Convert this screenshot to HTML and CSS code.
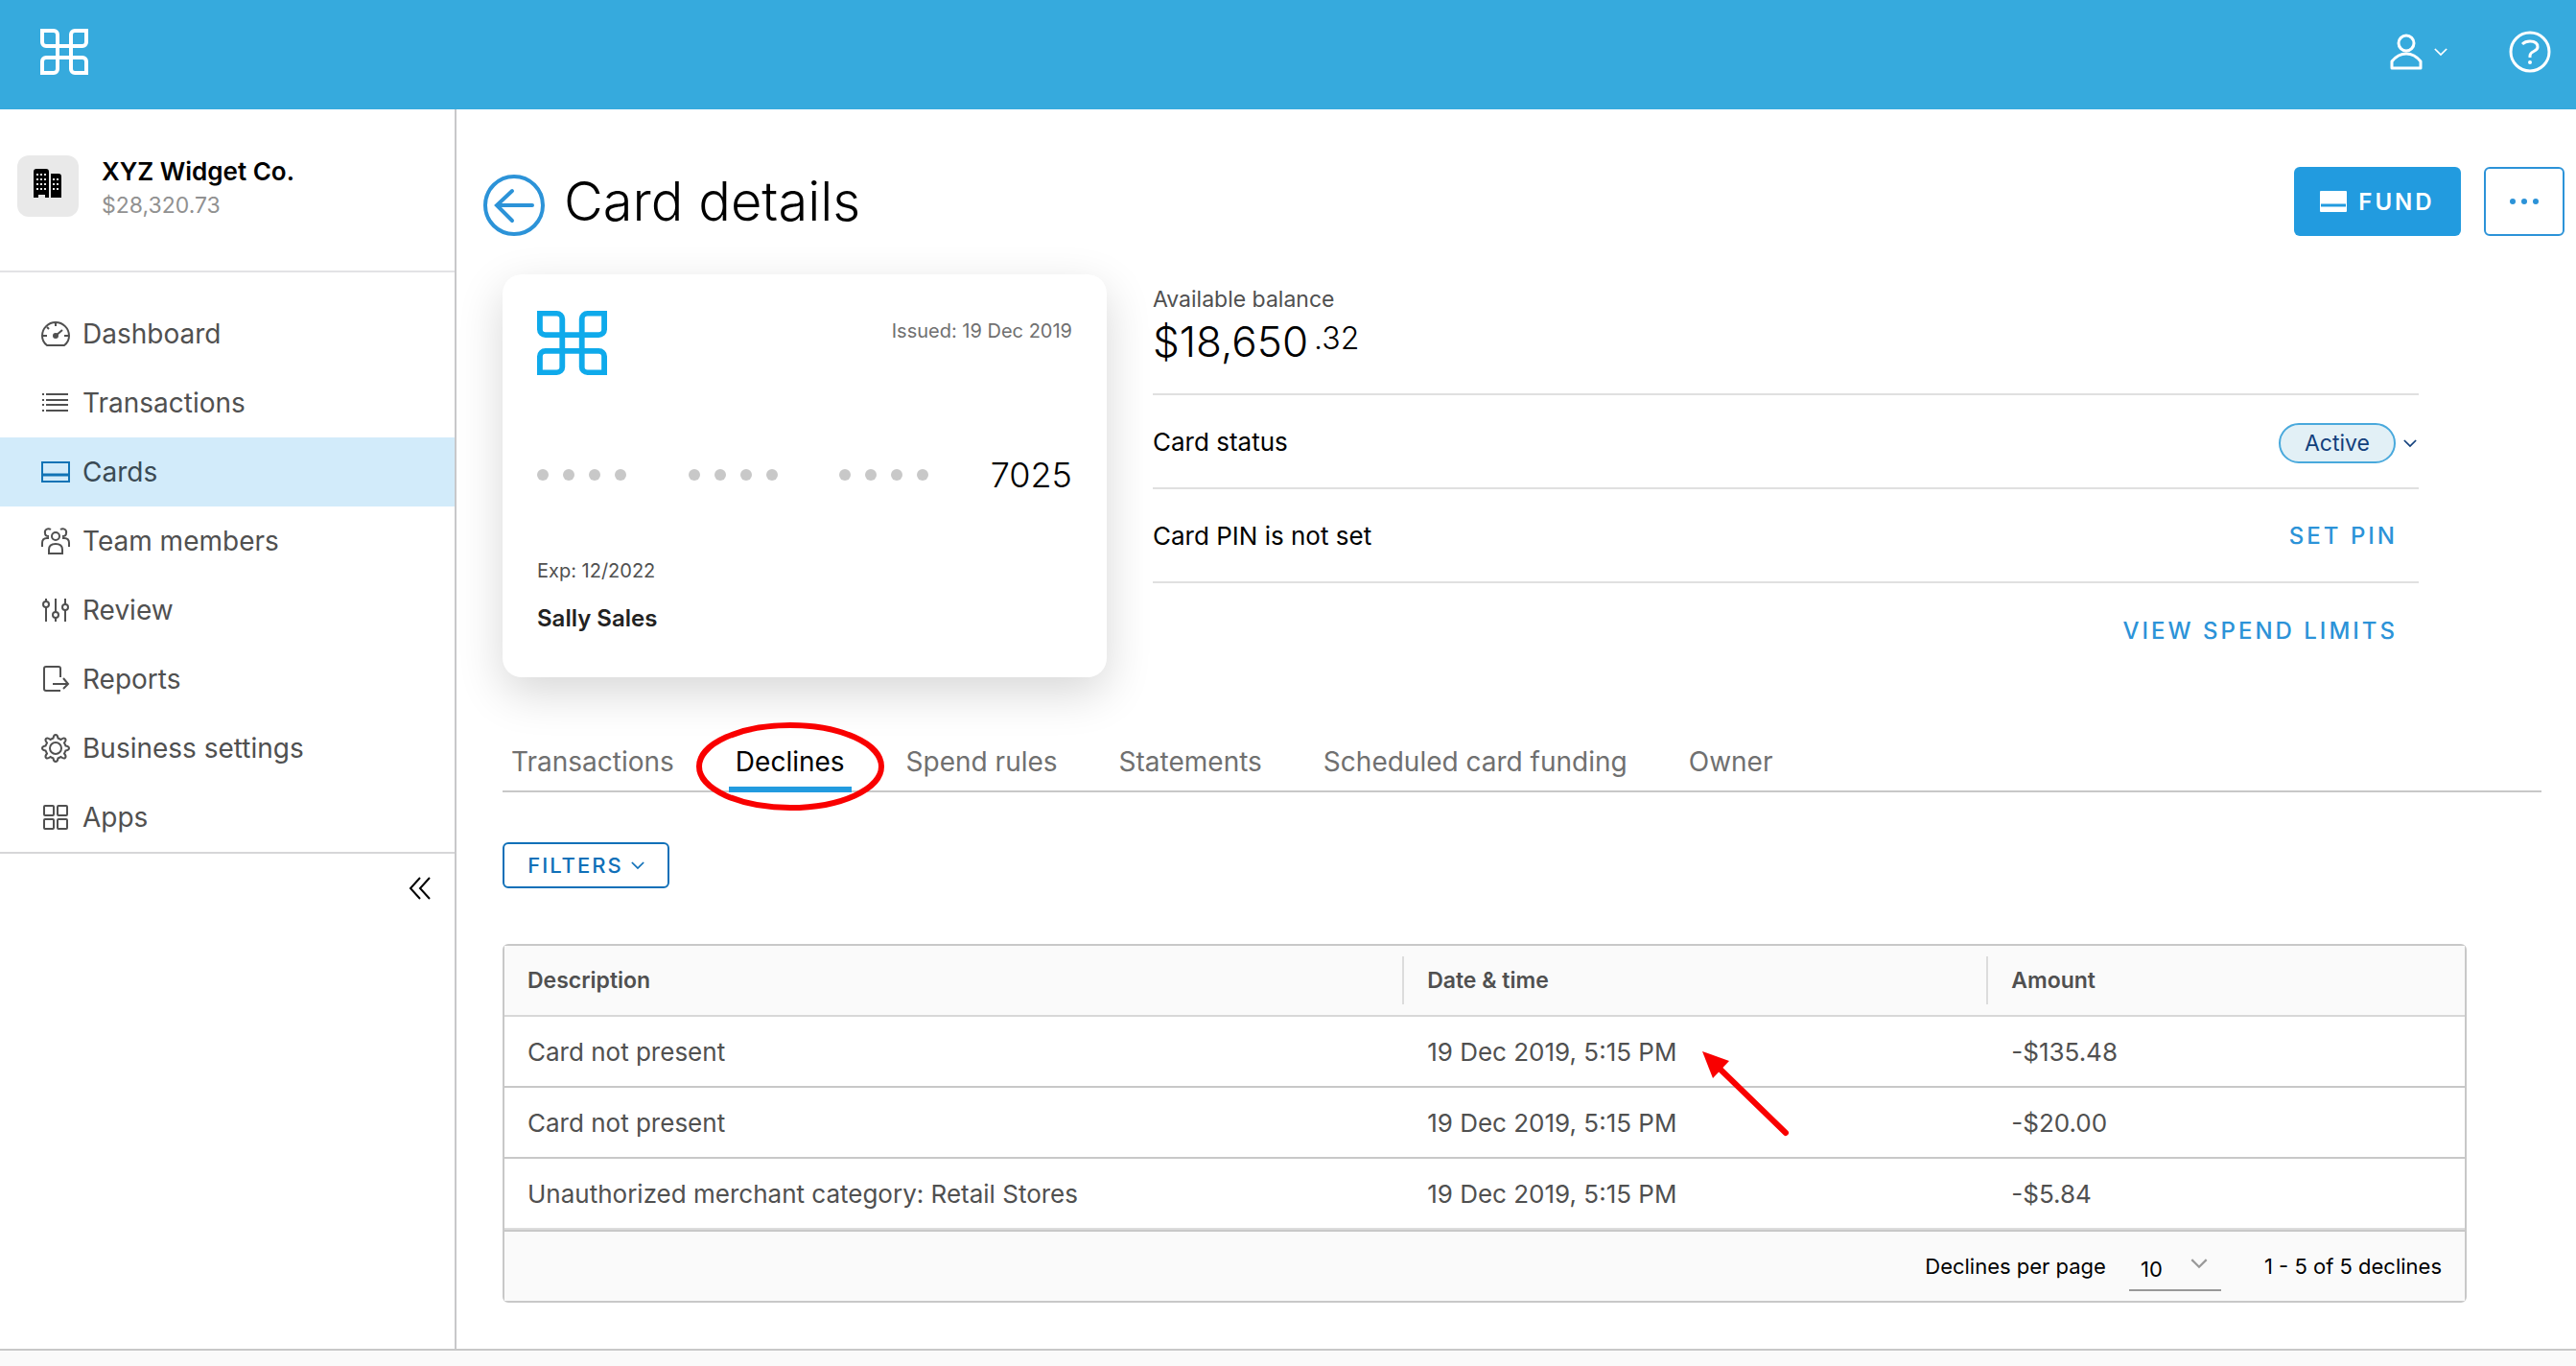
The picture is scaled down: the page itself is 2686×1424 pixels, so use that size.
FILE: index.html
```html
<!DOCTYPE html>
<html lang="en">
<head>
    <meta charset="UTF-8">
    <meta name="viewport" content="width=device-width, initial-scale=1.0">
    <title>Card details</title>
    <link rel="stylesheet" href="styles.css">
</head>
<body>
    <!-- shared logo -->
    <svg class="defs" width="0" height="0" aria-hidden="true">
        <symbol id="logo" viewBox="0 0 50 48" preserveAspectRatio="none">
            <path d="M2 2h12a4 4 0 0 1 4 4v36a4 4 0 0 1-4 4H2V34a4 4 0 0 1 4-4h38a4 4 0 0 1 4 4v12H36a4 4 0 0 1-4-4V6a4 4 0 0 1 4-4h12v12a4 4 0 0 1-4 4H6a4 4 0 0 1-4-4z" fill="none" stroke="currentColor" stroke-width="4"/>
        </symbol>
        <symbol id="chevron" viewBox="0 0 16 10">
            <path d="M1 1l7 7 7-7" fill="none" stroke="currentColor" stroke-width="2"/>
        </symbol>
    </svg>

    <header class="topbar">
        <a href="#" class="topbar-logo" aria-label="Home"><svg width="50" height="48"><use href="#logo"/></svg></a>
        <div class="topbar-actions">
            <button type="button" class="icon-button user-button" aria-label="Account">
                <svg width="34" height="38" viewBox="0 0 34 38" fill="none" stroke="currentColor" stroke-width="3">
                    <circle cx="17" cy="10" r="8"/>
                    <path d="M2 36V29C6 24 11 21 17 21s11 3 15 8v7z" stroke-linejoin="round"/>
                </svg>
                <svg width="14" height="9"><use href="#chevron"/></svg>
            </button>
            <button type="button" class="icon-button" aria-label="Help">
                <svg width="44" height="44" viewBox="0 0 44 44" fill="none" stroke="currentColor" stroke-width="3">
                    <circle cx="22" cy="22" r="20"/>
                    <path d="M14 14c2-2 5-3 8-3 5 0 8 2 8 6 0 5-8 4-8 9v2"/>
                    <circle cx="22" cy="33" r="2" fill="currentColor" stroke="none"/>
                </svg>
            </button>
        </div>
    </header>

    <div class="layout">
        <aside class="sidebar">
            <div class="company">
                <span class="company-icon">
                    <svg width="30" height="30" viewBox="0 0 30 30">
                        <path d="M0 30V3q0-3 3-3h10q3 0 3 3v27h-4v-3H5v3zM18 30V5h8q3 0 3 3v22z"/>
                        <path d="M3 6h11M3 11h11M3 16h11M3 21h11M20 11h8M20 16h8M20 21h8" stroke="#e9e9e9" stroke-width="2" stroke-dasharray="2 2"/>
                    </svg>
                </span>
                <div>
                    <div class="company-name">XYZ Widget Co.</div>
                    <div class="company-balance">$28,320.73</div>
                </div>
            </div>
            <nav class="menu">
                <a href="#">
                    <svg viewBox="0 0 30 30"><path d="M6 27C2 24 1 20 1 17a14 14 0 0 1 28 0c0 3-1 7-5 10zM15 3v4M6 8l2 2M2 17h4M24 17h4M15 17l7-6"/><circle cx="15" cy="17" r="2" fill="currentColor"/></svg>
                    Dashboard
                </a>
                <a href="#">
                    <svg viewBox="0 0 30 30"><path d="M5 6h23M5 12h23M5 17h23M5 23h23M1 6h2M1 12h2M1 17h2M1 23h2"/></svg>
                    Transactions
                </a>
                <a href="#" class="current">
                    <svg viewBox="0 0 30 30"><path d="M1 5h28v20H1z"/><path d="M1 18h28" stroke-width="3"/></svg>
                    Cards
                </a>
                <a href="#">
                    <svg viewBox="0 0 30 30"><circle cx="15" cy="10" r="4"/><path d="M8 28v-4c0-4 3-6 7-6s7 2 7 6v4zM10 3C7 1 3 3 4 7c0 2 2 3 4 3M20 3c3-2 7 0 6 4 0 2-2 3-4 3M1 21v-4c0-3 2-5 5-5h2M29 21v-4c0-3-2-5-5-5h-2"/></svg>
                    Team members
                </a>
                <a href="#">
                    <svg viewBox="0 0 30 30"><path d="M5 3v3M5 12v15M15 3v14M15 23v4M25 3v6M25 15v12"/><circle cx="5" cy="9" r="3"/><circle cx="15" cy="20" r="3"/><circle cx="25" cy="12" r="3"/></svg>
                    Review
                </a>
                <a href="#">
                    <svg viewBox="0 0 30 30"><path d="M20 13V4q0-2-2-2H5Q3 2 3 4v21q0 2 2 2h15M12 20h16M23 14l5 6-5 5"/></svg>
                    Reports
                </a>
                <a href="#">
                    <svg viewBox="0 0 30 30"><circle cx="15" cy="15" r="6"/><path d="M12.500 4.500Q13 1 15 1t2.500 3.500l3 1.500q3-2.500 4.500-1t-1 4.500l1.500 3Q29 13 29 15t-3.500 2.500l-1.500 3q2.500 3 1 4.500t-4.500-1l-3 1.500Q17 29 15 29t-2.500-3.500l-3-1.500q-3 2.500-4.500 1t1-4.500l-1.500-3Q1 17 1 15t3.500-2.500l1.500-3Q3.500 6.500 5 5t4.500 1z"/></svg>
                    Business settings
                </a>
                <a href="#">
                    <svg viewBox="0 0 30 30"><rect x="3" y="3" width="10" height="10" rx="1"/><rect x="17" y="3" width="10" height="10" rx="1"/><rect x="3" y="17" width="10" height="10" rx="1"/><rect x="17" y="17" width="10" height="10" rx="1"/></svg>
                    Apps
                </a>
            </nav>
            <button type="button" class="icon-button collapse" aria-label="Collapse menu">
                <svg width="24" height="24" viewBox="0 0 24 24" fill="none" stroke="currentColor" stroke-width="2"><path d="M12 1L2 12l10 11M22 1L12 12l10 11"/></svg>
            </button>
        </aside>

        <main class="main">
            <div class="page-head">
                <button type="button" class="icon-button back" aria-label="Back">
                    <svg width="64" height="64" viewBox="0 0 64 64" fill="none" stroke="currentColor" stroke-width="4">
                        <circle cx="32" cy="32" r="30"/>
                        <path d="M51 32H15M30 17L14 32l16 16" stroke-linecap="round"/>
                    </svg>
                </button>
                <h1>Card details</h1>
                <button type="button" class="fund">
                    <svg width="28" height="22" viewBox="0 0 28 22"><rect width="28" height="22" rx="1" fill="#fff"/><path d="M1 15h26" stroke="#229bdf" stroke-width="3"/></svg>
                    FUND
                </button>
                <button type="button" class="more" aria-label="More actions">
                    <svg width="30" height="6" viewBox="0 0 30 6" fill="currentColor"><circle cx="3" cy="3" r="3"/><circle cx="15" cy="3" r="3"/><circle cx="27" cy="3" r="3"/></svg>
                </button>
            </div>

            <div class="overview">
                <section class="bank-card">
                    <div class="bank-card-top">
                        <svg width="73" height="67"><use href="#logo"/></svg>
                        <span class="issued">Issued: 19 Dec 2019</span>
                    </div>
                    <div class="bank-card-number">
                        <span class="dots"><i></i><i></i><i></i><i></i></span>
                        <span class="dots"><i></i><i></i><i></i><i></i></span>
                        <span class="dots"><i></i><i></i><i></i><i></i></span>
                        <span class="last-four">7025</span>
                    </div>
                    <div class="expiry">Exp: 12/2022</div>
                    <div class="holder">Sally Sales</div>
                </section>

                <section class="details">
                    <div class="balance">
                        <div class="balance-label">Available balance</div>
                        <div class="balance-value">$18,650<span>.32</span></div>
                    </div>
                    <div class="detail-row">
                        <span>Card status</span>
                        <button type="button" class="icon-button status">
                            <span class="pill">Active</span>
                            <svg width="14" height="9"><use href="#chevron"/></svg>
                        </button>
                    </div>
                    <div class="detail-row">
                        <span>Card PIN is not set</span>
                        <a href="#" class="action">SET PIN</a>
                    </div>
                    <div class="detail-row">
                        <a href="#" class="action">VIEW SPEND LIMITS</a>
                    </div>
                </section>
            </div>

            <nav class="tabs">
                <a href="#">Transactions</a>
                <a href="#" class="active">Declines
                    <svg class="circle-mark" width="198" height="94" viewBox="0 0 198 94"><ellipse cx="99" cy="47" rx="95" ry="43" fill="none" stroke="#f90000" stroke-width="6"/></svg>
                </a>
                <a href="#">Spend rules</a>
                <a href="#">Statements</a>
                <a href="#">Scheduled card funding</a>
                <a href="#">Owner</a>
            </nav>

            <button type="button" class="filters">FILTERS <svg width="14" height="9"><use href="#chevron"/></svg></button>

            <div class="declines">
                <table>
                    <thead>
                        <tr>
                            <th class="col-description"><span>Description</span></th>
                            <th class="col-date"><span>Date &amp; time</span></th>
                            <th><span>Amount</span></th>
                        </tr>
                    </thead>
                    <tbody>
                        <tr>
                            <td>Card not present</td>
                            <td>
                                <span class="date">19 Dec 2019, 5:15 PM
                                    <svg class="arrow-mark" width="94" height="92" viewBox="0 0 94 92"><path d="M18 18l70 68" stroke="#f90000" stroke-width="6" stroke-linecap="round"/><path d="M1 1l28 10L12 29z" fill="#f90000"/></svg>
                                </span>
                            </td>
                            <td>-$135.48</td>
                        </tr>
                        <tr>
                            <td>Card not present</td>
                            <td>19 Dec 2019, 5:15 PM</td>
                            <td>-$20.00</td>
                        </tr>
                        <tr>
                            <td>Unauthorized merchant category: Retail Stores</td>
                            <td>19 Dec 2019, 5:15 PM</td>
                            <td>-$5.84</td>
                        </tr>
                    </tbody>
                </table>
                <div class="pager">
                    <label for="page-size">Declines per page</label>
                    <div class="select">
                        <select id="page-size">
                            <option>10</option>
                            <option>20</option>
                            <option>50</option>
                        </select>
                        <svg width="18" height="11"><use href="#chevron"/></svg>
                    </div>
                    <span>1 - 5 of 5 declines</span>
                </div>
            </div>
        </main>
    </div>

    <footer class="footer"></footer>
</body>
</html>
```

FILE: styles.css
```css
* {
    box-sizing: border-box;
}

body {
    margin: 0;
    min-height: 100vh;
    display: flex;
    flex-direction: column;
    font-family: Inter, "Open Sans", sans-serif;
    font-size: 26px;
    color: #000;
    background-color: #fff;
}

a {
    color: inherit;
    text-decoration: none;
}

button,
select {
    font-family: inherit;
    color: inherit;
    cursor: pointer;
}

svg {
    flex-shrink: 0;
}

.defs {
    position: absolute;
}

.icon-button {
    display: flex;
    align-items: center;
    padding: 0;
    border: none;
    background: none;
}

/* top bar */
.topbar {
    display: flex;
    align-items: center;
    justify-content: space-between;
    height: 114px;
    padding: 0 26px 6px 42px;
    background-color: #36aadd;
    color: #fff;
}

.topbar svg {
    display: block;
}

.topbar-actions {
    display: flex;
    gap: 64px;
}

.user-button {
    gap: 12px;
}

.layout {
    flex: 1;
    display: flex;
}

/* sidebar */
.sidebar {
    width: 476px;
    flex-shrink: 0;
    border-right: 2px solid #c8c8ca;
}

.company {
    display: flex;
    gap: 24px;
    height: 170px;
    padding: 48px 18px 0;
    border-bottom: 2px solid #e3e3e5;
}

.company-icon {
    display: flex;
    width: 64px;
    height: 64px;
    padding: 14px 17px;
    border-radius: 12px;
    background-color: #e9e9e9;
}

.company-name {
    font-size: 26px;
    line-height: 34px;
    font-weight: 600;
}

.company-balance {
    font-size: 23px;
    line-height: 36px;
    color: #919191;
}

.menu {
    padding-top: 28px;
    border-bottom: 2px solid #d6d6d8;
}

.menu a {
    display: flex;
    align-items: center;
    gap: 13px;
    height: 72px;
    padding-left: 43px;
    font-size: 28px;
    color: #505050;
}

.menu svg {
    width: 30px;
    height: 30px;
    fill: none;
    stroke: currentColor;
    stroke-width: 2;
}

.menu .current {
    background-color: #d2ebfa;
    color: #3a4a54;
}

.menu .current svg {
    color: #1173b5;
}

.collapse {
    margin: 24px 24px 0 auto;
}

/* page heading */
.main {
    flex: 1;
    min-width: 0;
    padding: 60px 114px 48px 48px;
}

.page-head {
    display: flex;
    align-items: center;
    gap: 20px;
    height: 72px;
    margin-left: -20px;
    margin-right: -102px;
}

.back {
    align-self: flex-end;
    color: #2c93d8;
}

h1 {
    flex: 1;
    margin: 0;
    font-size: 56px;
    line-height: 72px;
    font-weight: 300;
}

.fund {
    display: flex;
    align-items: center;
    justify-content: center;
    gap: 12px;
    width: 174px;
    height: 72px;
    border: none;
    border-radius: 6px;
    background-color: #229bdf;
    color: #fff;
    font-size: 24px;
    font-weight: 600;
    letter-spacing: 3px;
}

.more {
    display: flex;
    align-items: center;
    justify-content: center;
    width: 84px;
    height: 72px;
    margin-left: 4px;
    border: 2px solid #2c93d8;
    border-radius: 6px;
    background-color: #fff;
    color: #2c93d8;
}

/* card and its details */
.overview {
    display: flex;
    gap: 48px;
    margin-top: 40px;
    margin-right: 50px;
}

.bank-card {
    width: 630px;
    height: 420px;
    flex-shrink: 0;
    padding: 38px 36px 0;
    border-radius: 20px;
    background-color: #fff;
    box-shadow: 0 16px 48px rgba(0, 0, 0, 0.16);
}

.bank-card-top {
    display: flex;
    justify-content: space-between;
    color: #0faaeb;
}

.issued {
    padding-top: 7px;
    font-size: 20px;
    line-height: 28px;
    color: #707070;
}

.bank-card-number {
    display: flex;
    align-items: center;
    justify-content: space-between;
    margin-top: 80px;
}

.dots {
    display: flex;
    gap: 15px;
}

.dots i {
    width: 12px;
    height: 12px;
    border-radius: 50%;
    background-color: #c8c8c8;
}

.last-four {
    font-size: 36px;
    line-height: 48px;
    font-weight: 300;
}

.expiry {
    margin-top: 62px;
    font-size: 20px;
    line-height: 28px;
    color: #505050;
}

.holder {
    margin-top: 22px;
    font-size: 24px;
    line-height: 28px;
    font-weight: 600;
    color: #222;
}

.details {
    flex: 1;
}

.balance {
    height: 126px;
    padding-top: 12px;
    border-bottom: 2px solid #e0e0e0;
}

.balance-label {
    font-size: 23px;
    line-height: 28px;
    color: #505050;
}

.balance-value {
    display: flex;
    gap: 6px;
    font-size: 44px;
    line-height: 60px;
    font-weight: 300;
}

.balance-value span {
    font-size: 32px;
    line-height: 54px;
}

.detail-row {
    display: flex;
    align-items: center;
    justify-content: space-between;
    height: 98px;
    border-bottom: 2px solid #e0e0e0;
    font-size: 26px;
}

.detail-row:last-child {
    justify-content: flex-end;
    border-bottom: none;
}

.action {
    padding-right: 22px;
    font-size: 24px;
    font-weight: 500;
    letter-spacing: 3px;
    color: #2c93d8;
}

.status {
    gap: 8px;
    padding-top: 4px;
    padding-right: 2px;
    color: #12407c;
}

.pill {
    width: 122px;
    height: 42px;
    border: 2px solid #49a9dc;
    border-radius: 21px;
    background-color: #e2f0f6;
    font-size: 23px;
    line-height: 38px;
    text-align: center;
}

/* tabs */
.tabs {
    display: flex;
    gap: 50px;
    height: 62px;
    margin-top: 58px;
    margin-right: -78px;
    padding-left: 2px;
    border-bottom: 2px solid #c8c8c8;
    color: #707070;
}

.tabs a {
    position: relative;
    height: 62px;
    padding: 0 7px;
    font-size: 28px;
    line-height: 60px;
}

.tabs .active {
    border-bottom: 6px solid #229bdf;
    color: #000;
}

.circle-mark {
    position: absolute;
    left: 50%;
    top: -12px;
    margin-left: -99px;
}

.filters {
    display: flex;
    align-items: center;
    justify-content: center;
    gap: 8px;
    width: 174px;
    height: 48px;
    margin-top: 52px;
    border: 2px solid #1070b8;
    border-radius: 6px;
    background-color: #fff;
    color: #1070b8;
    font-size: 22px;
    font-weight: 500;
    letter-spacing: 2px;
}

/* declines table */
.declines {
    margin-top: 58px;
    border: 2px solid #c8c8c8;
    border-radius: 6px;
}

table {
    width: 100%;
    border-collapse: separate;
    border-spacing: 0;
    table-layout: fixed;
    color: #505050;
}

.col-description {
    width: 45.8%;
}

.col-date {
    width: 29.8%;
}

th {
    height: 74px;
    padding: 0;
    border-bottom: 2px solid #d8d8d8;
    background-color: #fafafa;
    font-size: 23px;
    font-weight: 600;
    text-align: left;
}

th span {
    display: block;
    padding-left: 24px;
    line-height: 50px;
    border-left: 2px solid #dcdcdc;
}

td {
    height: 74px;
    padding: 0 0 0 26px;
    border-bottom: 2px solid #c8c8c8;
    font-size: 26px;
}

th:first-child span,
td:first-child {
    padding-left: 24px;
    border-left: none;
}

tbody tr:last-child td {
    border-bottom-color: #dcdcdc;
}

.date {
    position: relative;
}

.arrow-mark {
    position: absolute;
    left: 100%;
    top: 14px;
    margin-left: 26px;
    z-index: 1;
}

.pager {
    display: flex;
    align-items: center;
    justify-content: flex-end;
    height: 74px;
    padding-right: 24px;
    border-top: 2px solid #c8c8c8;
    background-color: #fafafa;
    font-size: 22px;
}

.select {
    position: relative;
    margin: 12px 45px 0 24px;
}

.select select {
    display: block;
    width: 96px;
    height: 40px;
    padding: 0 12px 4px;
    appearance: none;
    border: none;
    border-bottom: 2px solid #999;
    border-radius: 0;
    background: none;
    font-size: 22px;
}

.select svg {
    position: absolute;
    right: 14px;
    top: 6px;
    color: #999;
    pointer-events: none;
}

.footer {
    height: 18px;
    border-top: 2px solid #c8c8c8;
    background-color: #fafafa;
}
```
